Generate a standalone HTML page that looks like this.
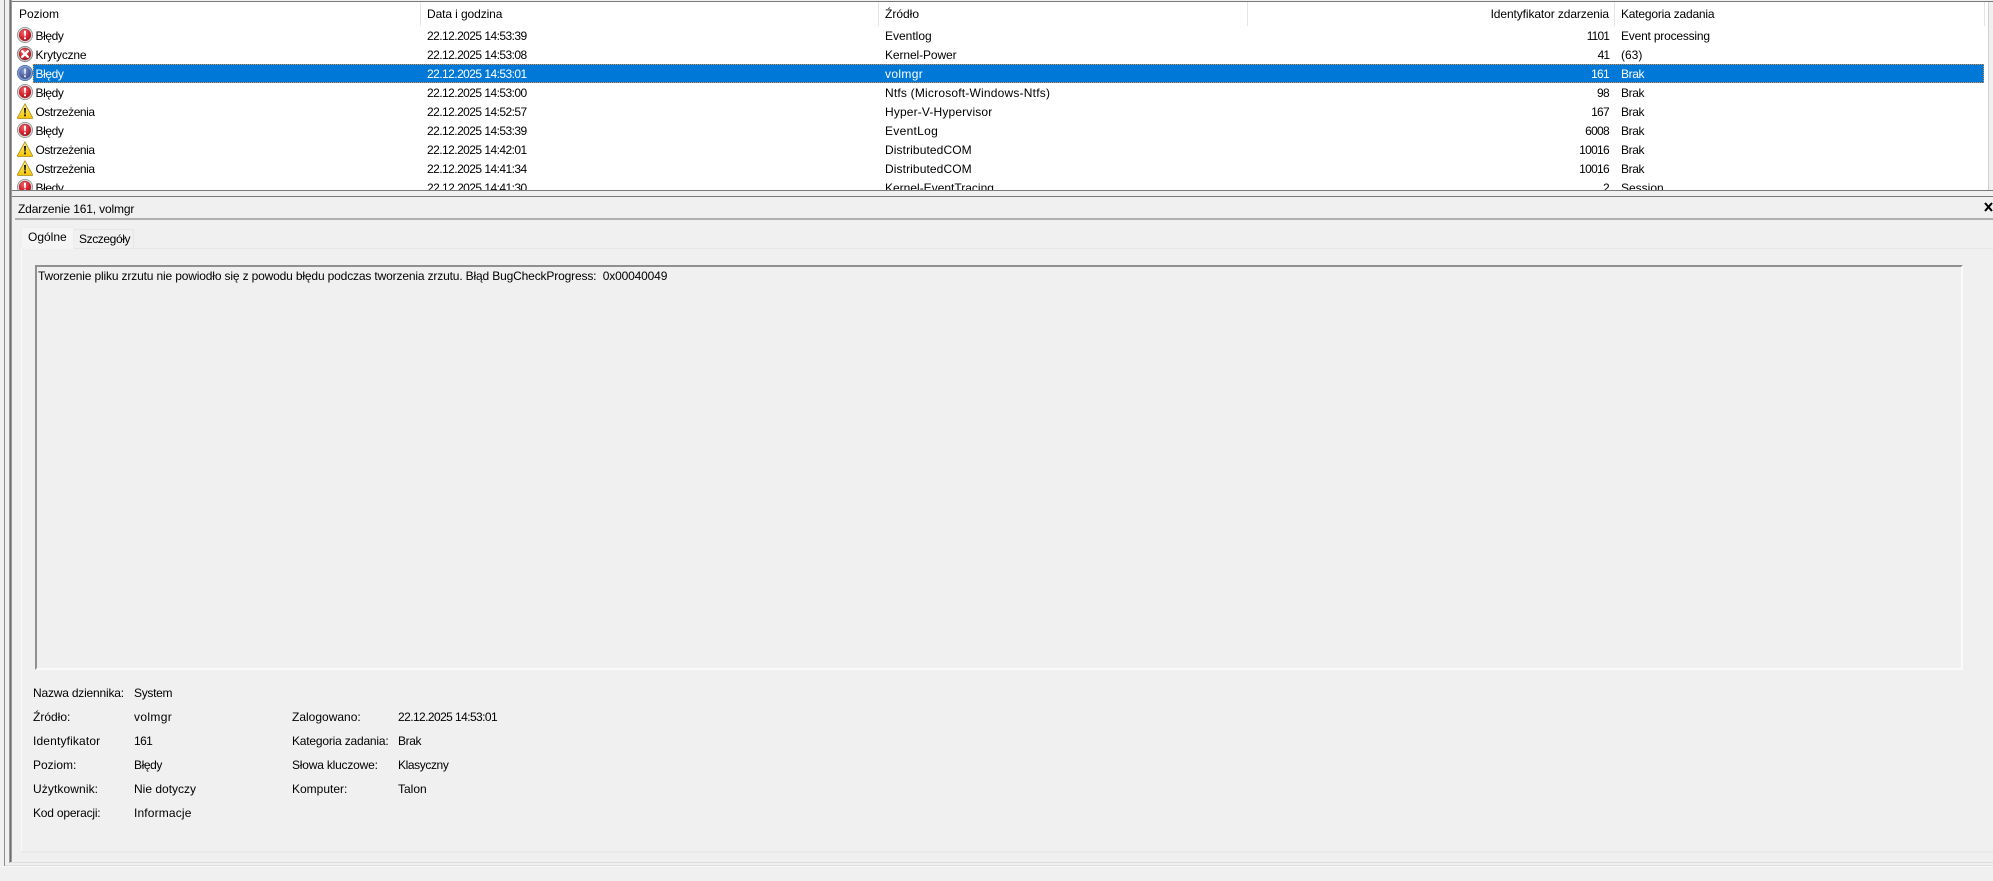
<!DOCTYPE html>
<html lang="pl">
<head>
<meta charset="utf-8">
<title>Zdarzenie 161, volmgr</title>
<style>
html,body{margin:0;padding:0;width:1993px;height:881px;overflow:hidden;background:#f0f0f0}
body{position:relative;font:12px/16px "Liberation Sans",sans-serif;color:#000}
.a{position:absolute;white-space:nowrap}
.l{position:absolute}
#list{position:absolute;left:12px;top:2px;width:1976px;height:188px;background:#fff;overflow:hidden}
#list .a{line-height:16px}
.r{position:absolute;left:0;width:1976px;height:19px}
.r svg{position:absolute;left:5px;top:1px}
.r span{position:absolute;top:2px;white-space:nowrap}
.c1{left:23.5px}.c2{left:415px;letter-spacing:-.55px}.c3{left:873px}.c4{right:379px;letter-spacing:-.7px}.c5{left:1609px}
.b{letter-spacing:-.4px}.o{letter-spacing:-.45px}.k{letter-spacing:-.2px}.v{letter-spacing:.35px}.m{letter-spacing:-.4px}
.sel{color:#fff}
.sel .bar{position:absolute;left:21px;top:0;width:1951px;height:19px;background:#0078d7;outline:1px dotted #e08a3a;outline-offset:-1px}
.s{position:absolute;top:0;width:1px;height:24px;background:#e5e5e5}
.h{position:absolute;top:4px;white-space:nowrap}
</style>
</head>
<body>
<svg width="0" height="0" style="position:absolute">
  <defs>
    <radialGradient id="gr" cx="40%" cy="30%" r="75%"><stop offset="0" stop-color="#f2626a"/><stop offset=".6" stop-color="#d8232e"/><stop offset="1" stop-color="#a81420"/></radialGradient>
    <radialGradient id="gb" cx="40%" cy="30%" r="75%"><stop offset="0" stop-color="#8a9ad0"/><stop offset=".6" stop-color="#54649f"/><stop offset="1" stop-color="#3d4a86"/></radialGradient>
    <linearGradient id="gy" x1="0" y1="0" x2="0" y2="1"><stop offset="0" stop-color="#fff38a"/><stop offset="1" stop-color="#f5c400"/></linearGradient>
    <symbol id="err" viewBox="0 0 16 16">
      <circle cx="8" cy="8" r="7.6" fill="#d9d9d9" stroke="#8d8d8d" stroke-width=".8"/>
      <circle cx="8" cy="8" r="5.9" fill="url(#gr)" stroke="#9c2a30" stroke-width=".5"/>
      <path d="M6.9 3.6h2.2L8.7 9.2H7.3z" fill="#fff"/><rect x="7" y="10.2" width="2" height="2" rx=".6" fill="#fff"/>
    </symbol>
    <symbol id="sel" viewBox="0 0 16 16">
      <circle cx="8" cy="8" r="7.6" fill="#7f9fd2" stroke="#4d6ba8" stroke-width=".8"/>
      <circle cx="8" cy="8" r="5.9" fill="url(#gb)"/>
      <path d="M6.9 3.6h2.2L8.7 9.2H7.3z" fill="#dfe6f7"/><rect x="7" y="10.2" width="2" height="2" rx=".6" fill="#dfe6f7"/>
    </symbol>
    <symbol id="crit" viewBox="0 0 16 16">
      <circle cx="8" cy="8" r="7.6" fill="#c4c4c4" stroke="#7d7d7d" stroke-width=".8"/>
      <circle cx="8" cy="8" r="5.9" fill="url(#gr)" stroke="#8a2a30" stroke-width=".5"/>
      <path d="M5.2 5.2 10.8 10.8M10.8 5.2 5.2 10.8" stroke="#fff" stroke-width="2.4" stroke-linecap="round"/>
    </symbol>
    <symbol id="warn" viewBox="0 0 16 16">
      <path d="M8 .8 15.6 14.6a.6.6 0 0 1-.5.9H.9a.6.6 0 0 1-.5-.9z" fill="url(#gy)" stroke="#a98a1c" stroke-width=".8"/>
      <path d="M7 5h2L8.6 10.6H7.4z" fill="#111"/><rect x="7.1" y="11.4" width="1.8" height="1.9" fill="#111"/>
    </symbol>
  </defs>
</svg>

<!-- frame lines -->
<div class="l" style="left:0;top:0;width:4px;height:850px;background:#f0f0f0"></div>
<div class="l" style="left:4px;top:0;width:1px;height:866px;background:#8c8c8c"></div>
<div class="l" style="left:9px;top:0;width:3px;height:863px;background:#9a9a9a"></div>
<div class="l" style="left:10px;top:0;width:1px;height:863px;background:#6f6f6f"></div>
<div class="l" style="left:5px;top:865px;width:1988px;height:1px;background:#dedede"></div>
<div class="l" style="left:10px;top:862px;width:1983px;height:1px;background:#dedede"></div>
<div class="l" style="left:0;top:866px;width:1993px;height:1px;background:#f8f8f8"></div>

<!-- list -->
<div class="l" style="left:12px;top:1px;width:1981px;height:1px;background:#7a7a7a"></div>
<div class="l" style="left:12px;top:190px;width:1981px;height:1px;background:#7a7a7a"></div>
<div class="l" style="left:1988px;top:2px;width:1px;height:188px;background:#d0d0d0"></div>
<div id="list">
  <div class="s" style="left:408px"></div>
  <div class="s" style="left:866px"></div>
  <div class="s" style="left:1235px"></div>
  <div class="s" style="left:1602px"></div>
  <div class="s" style="left:1972px"></div>
  <span class="h" style="left:7px">Poziom</span>
  <span class="h" style="left:415px;letter-spacing:-.1px">Data i godzina</span>
  <span class="h" style="left:873px">Źródło</span>
  <span class="h" style="right:379px;letter-spacing:-.1px">Identyfikator zdarzenia</span>
  <span class="h" style="left:1609px;letter-spacing:-.2px">Kategoria zadania</span>

  <div class="r" style="top:24px"><svg width="16" height="16"><use href="#err"/></svg><span class="c1 b">Błędy</span><span class="c2">22.12.2025 14:53:39</span><span class="c3">Eventlog</span><span class="c4" style="letter-spacing:-.9px">1101</span><span class="c5" style="letter-spacing:-.2px">Event processing</span></div>
  <div class="r" style="top:43px"><svg width="16" height="16"><use href="#crit"/></svg><span class="c1 k">Krytyczne</span><span class="c2">22.12.2025 14:53:08</span><span class="c3" style="letter-spacing:-.1px">Kernel-Power</span><span class="c4" style="letter-spacing:-1px">41</span><span class="c5">(63)</span></div>
  <div class="r sel" style="top:62px"><div class="bar"></div><svg width="16" height="16"><use href="#sel"/></svg><span class="c1 b">Błędy</span><span class="c2">22.12.2025 14:53:01</span><span class="c3 v">volmgr</span><span class="c4">161</span><span class="c5 m">Brak</span></div>
  <div class="r" style="top:81px"><svg width="16" height="16"><use href="#err"/></svg><span class="c1 b">Błędy</span><span class="c2">22.12.2025 14:53:00</span><span class="c3" style="letter-spacing:.2px">Ntfs (Microsoft-Windows-Ntfs)</span><span class="c4">98</span><span class="c5 m">Brak</span></div>
  <div class="r" style="top:100px"><svg width="16" height="16"><use href="#warn"/></svg><span class="c1 o">Ostrzeżenia</span><span class="c2">22.12.2025 14:52:57</span><span class="c3" style="letter-spacing:.15px">Hyper-V-Hypervisor</span><span class="c4">167</span><span class="c5 m">Brak</span></div>
  <div class="r" style="top:119px"><svg width="16" height="16"><use href="#err"/></svg><span class="c1 b">Błędy</span><span class="c2">22.12.2025 14:53:39</span><span class="c3" style="letter-spacing:.3px">EventLog</span><span class="c4">6008</span><span class="c5 m">Brak</span></div>
  <div class="r" style="top:138px"><svg width="16" height="16"><use href="#warn"/></svg><span class="c1 o">Ostrzeżenia</span><span class="c2">22.12.2025 14:42:01</span><span class="c3" style="letter-spacing:.1px">DistributedCOM</span><span class="c4">10016</span><span class="c5 m">Brak</span></div>
  <div class="r" style="top:157px"><svg width="16" height="16"><use href="#warn"/></svg><span class="c1 o">Ostrzeżenia</span><span class="c2">22.12.2025 14:41:34</span><span class="c3" style="letter-spacing:.1px">DistributedCOM</span><span class="c4">10016</span><span class="c5 m">Brak</span></div>
  <div class="r" style="top:176px"><svg width="16" height="16"><use href="#err"/></svg><span class="c1 b">Błędy</span><span class="c2">22.12.2025 14:41:30</span><span class="c3">Kernel-EventTracing</span><span class="c4">2</span><span class="c5">Session</span></div>
</div>

<!-- detail pane -->
<div class="l" style="left:12px;top:196px;width:1981px;height:1px;background:#7a7a7a"></div>
<div class="a" style="left:18px;top:201px;letter-spacing:-.15px">Zdarzenie 161, volmgr</div>
<svg class="l" style="left:1984px;top:202px" width="9" height="10"><path d="M1 1 8 9M8 1 1 9" stroke="#000" stroke-width="2"/></svg>
<div class="l" style="left:15px;top:218px;width:1978px;height:2px;background:#b0b0b0"></div>

<div class="l" style="left:21px;top:248px;width:1972px;height:1px;background:#e6e6e6"></div>
<div class="l" style="left:21px;top:248px;width:1px;height:604px;background:#fafafa"></div>
<div class="l" style="left:21px;top:851px;width:1972px;height:2px;background:#eaeaea"></div>
<div class="l" style="left:21px;top:227px;width:53px;height:22px;background:#f5f5f5;border:1px solid #ededed;border-bottom:none;box-sizing:border-box"></div>
<div class="l" style="left:74px;top:229px;width:60px;height:19px;background:#f0f0f0;border:1px solid #e6e6e6;border-bottom:none;border-left:none;box-sizing:border-box"></div>
<div class="a" style="left:28px;top:229px">Ogólne</div>
<div class="a" style="left:79px;top:231px;letter-spacing:-.4px">Szczegóły</div>

<div class="l" style="left:35px;top:265px;width:1928px;height:405px;box-sizing:border-box;border-top:2px solid #909090;border-left:2px solid #909090;border-right:2px solid #fafafa;border-bottom:2px solid #fafafa"></div>
<div class="a" style="left:38px;top:268px;letter-spacing:-.155px">Tworzenie pliku zrzutu nie powiodło się z powodu błędu podczas tworzenia zrzutu. Błąd BugCheckProgress:&nbsp; 0x00040049</div>

<div class="a" style="left:33px;top:685px;letter-spacing:-.2px">Nazwa dziennika:</div><div class="a" style="left:134px;top:685px;letter-spacing:-.3px">System</div>
<div class="a" style="left:33px;top:709px">Źródło:</div><div class="a" style="left:134px;top:709px;letter-spacing:.35px">volmgr</div>
<div class="a" style="left:33px;top:733px;letter-spacing:.15px">Identyfikator</div><div class="a" style="left:134px;top:733px;letter-spacing:-.6px">161</div>
<div class="a" style="left:33px;top:757px">Poziom:</div><div class="a" style="left:134px;top:757px;letter-spacing:-.4px">Błędy</div>
<div class="a" style="left:33px;top:781px;letter-spacing:.1px">Użytkownik:</div><div class="a" style="left:134px;top:781px">Nie dotyczy</div>
<div class="a" style="left:33px;top:805px;letter-spacing:-.2px">Kod operacji:</div><div class="a" style="left:134px;top:805px;letter-spacing:.15px">Informacje</div>
<div class="a" style="left:292px;top:709px">Zalogowano:</div><div class="a" style="left:398px;top:709px;letter-spacing:-.58px">22.12.2025 14:53:01</div>
<div class="a" style="left:292px;top:733px;letter-spacing:-.2px">Kategoria zadania:</div><div class="a" style="left:398px;top:733px;letter-spacing:-.4px">Brak</div>
<div class="a" style="left:292px;top:757px;letter-spacing:-.2px">Słowa kluczowe:</div><div class="a" style="left:398px;top:757px;letter-spacing:-.4px">Klasyczny</div>
<div class="a" style="left:292px;top:781px">Komputer:</div><div class="a" style="left:398px;top:781px">Talon</div>
</body>
</html>
